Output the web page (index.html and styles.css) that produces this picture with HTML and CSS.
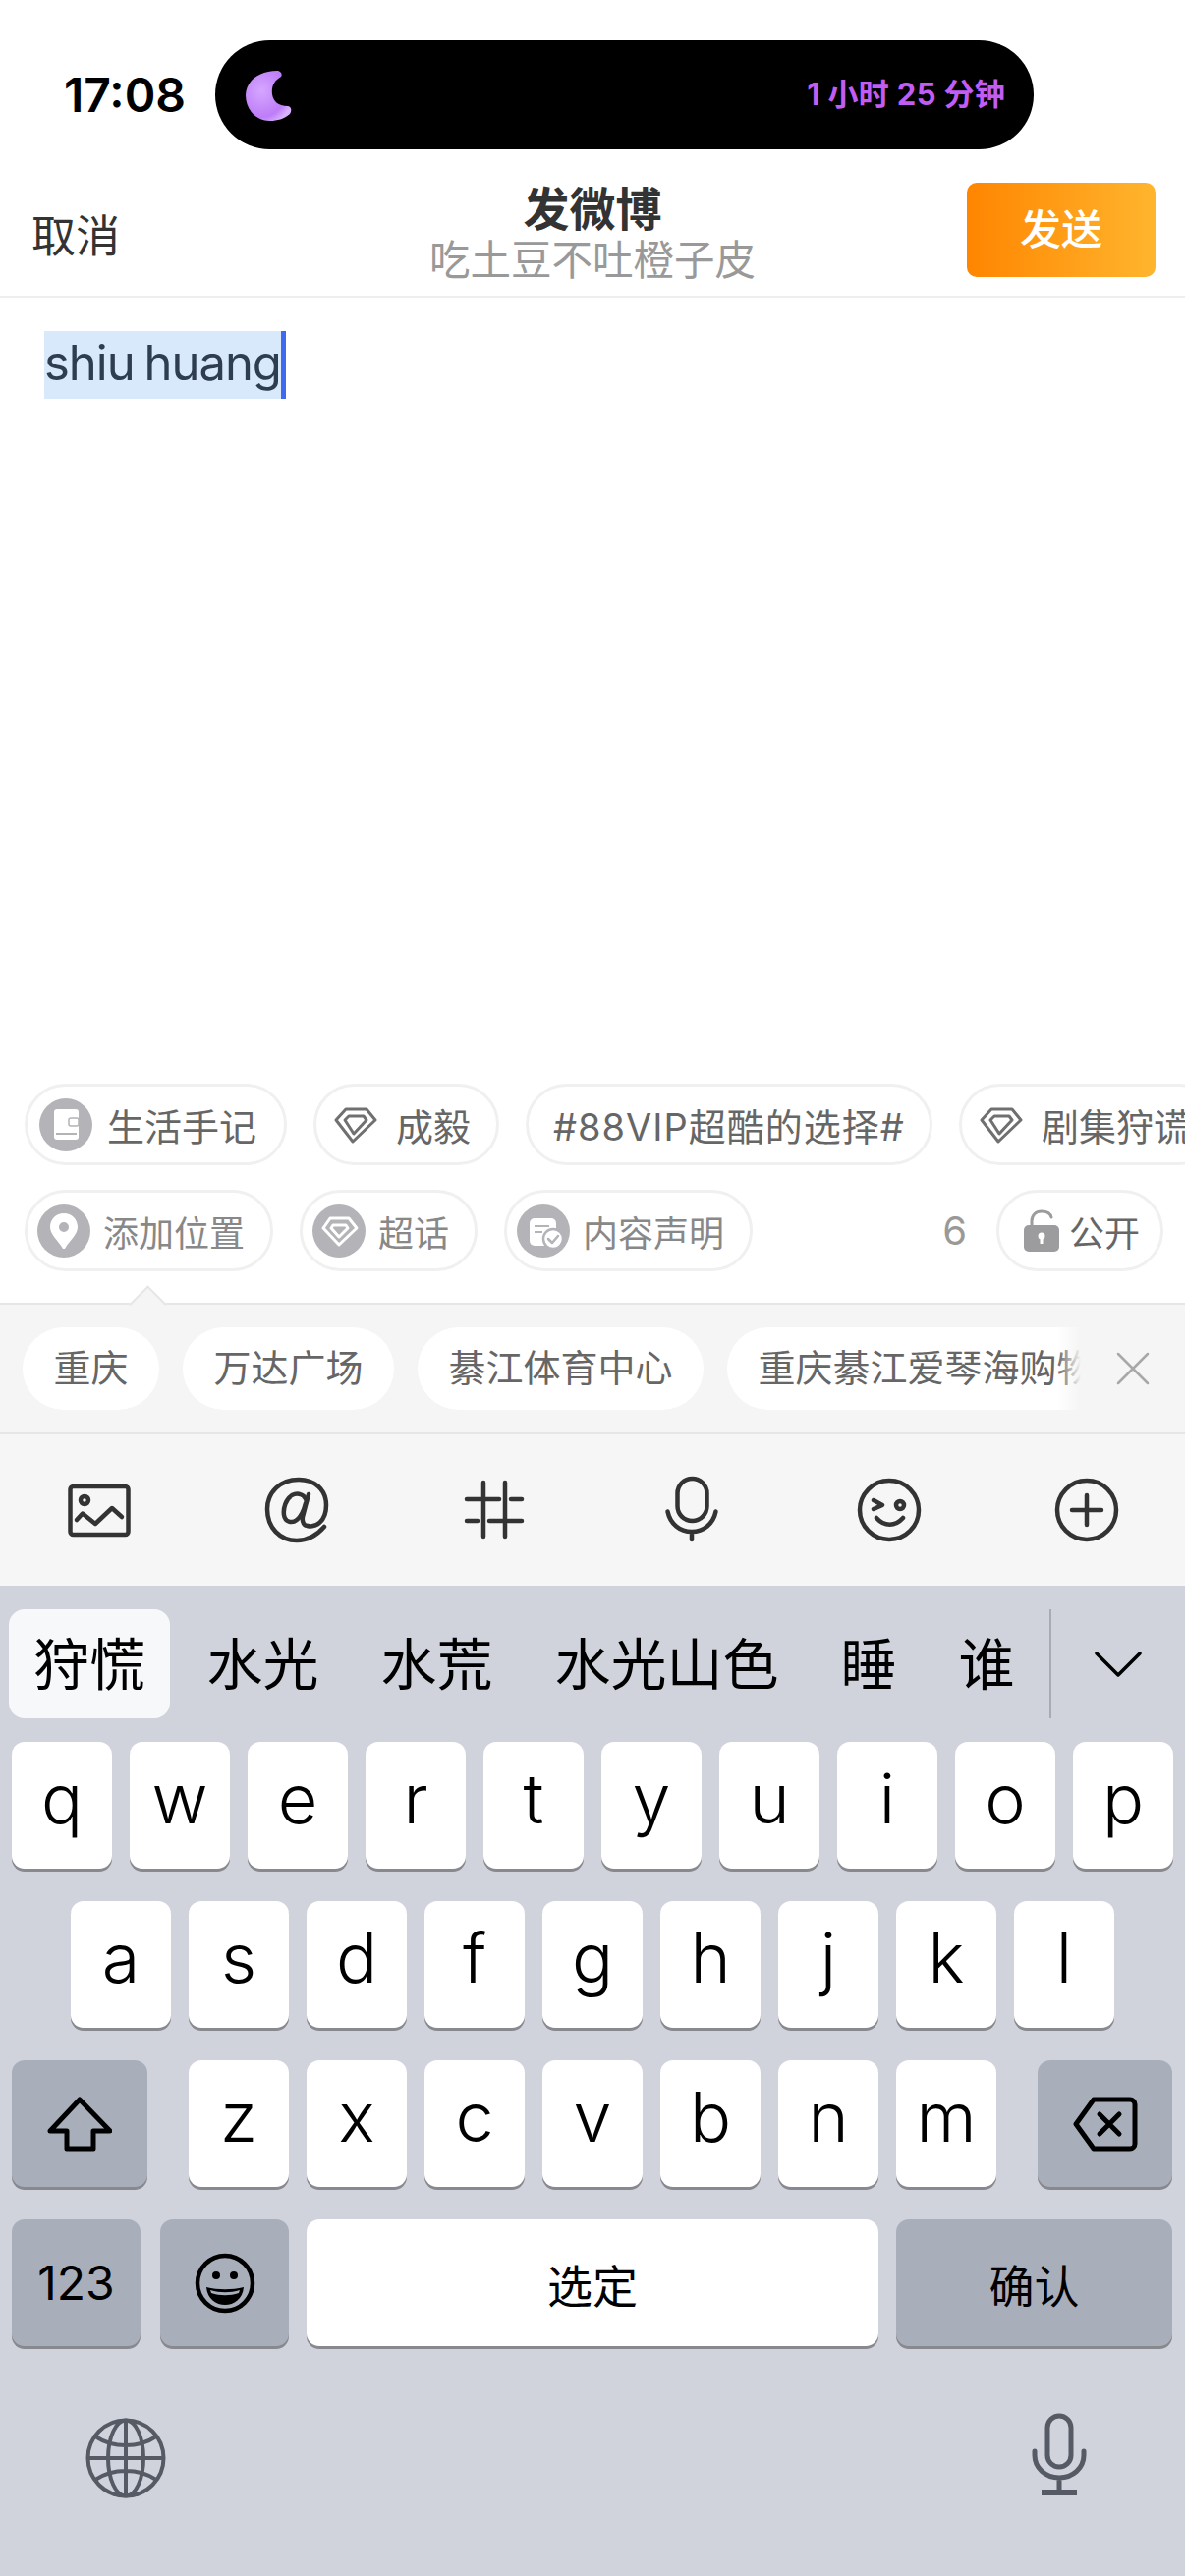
FILE: index.html
```html
<!DOCTYPE html>
<html lang="zh">

<head>
    <meta charset="UTF-8">
    <meta name="viewport" content="width=device-width, initial-scale=1.0">
    <title>发微博</title>
    <link rel="stylesheet" href="styles.css">
</head>

<body>
    <!-- Status bar -->
    <div class="status">
        <div class="time">17:08</div>
        <div class="island">
            <svg class="moon" width="48" height="54" viewBox="0 0 48 54">
                <defs>
                    <radialGradient id="moonFill" cx="0.35" cy="0.4" r="0.7">
                        <stop offset="0" stop-color="#d6a6ff" />
                        <stop offset="0.75" stop-color="#bd7df8" />
                        <stop offset="1" stop-color="#d9b0fd" />
                    </radialGradient>
                </defs>
                <path fill="url(#moonFill)" d="M33 2C36 2 39 5 37 8C30 12 27 18 28 26C29 33 34 38 44 38C48 39 48 43 46 46C40 51 33 53 26 53C11 53 1 41 1 27C1 13 14 2 33 2Z" />
            </svg>
            <div class="timer">1 小时 25 分钟</div>
        </div>
    </div>

    <!-- Nav -->
    <div class="nav">
        <div class="cancel">取消</div>
        <div class="title">
            <div class="title-main">发微博</div>
            <div class="title-sub">吃土豆不吐橙子皮</div>
        </div>
        <div class="send-wrap"><div class="send">发送</div></div>
    </div>

    <!-- Compose -->
    <div class="compose">
        <span class="selected">shiu huang</span>
    </div>

    <!-- Topic chips -->
    <div class="chips chips-top">
        <div class="chip chip-lead">
            <svg class="chip-icon" width="54" height="54" viewBox="0 0 54 54">
                <circle cx="27" cy="27" r="27" fill="#b3b3b8" />
                <rect x="15" y="11" width="25" height="31" rx="3" fill="#fff" />
                <rect x="17" y="35" width="21" height="2" fill="#b3b3b8" />
                <rect x="30" y="20" width="10" height="8" rx="2" fill="#fff" stroke="#b3b3b8" stroke-width="1.5" />
            </svg>
            <span>生活手记</span>
        </div>
        <div class="chip chip-gem">
            <svg width="44" height="38" viewBox="0 0 44 38" fill="none" stroke="#707070" stroke-width="3" stroke-linejoin="round" stroke-linecap="round">
                <path d="M12 3H33L42 14L19 36L2 14Z" />
                <path d="M15 10H30L33 14L20 28L11 14Z" />
            </svg>
            <span>成毅</span>
        </div>
        <div class="chip chip-plain"><span>#88VIP超酷的选择#</span></div>
        <div class="chip chip-gem">
            <svg width="44" height="38" viewBox="0 0 44 38" fill="none" stroke="#707070" stroke-width="3" stroke-linejoin="round" stroke-linecap="round">
                <path d="M12 3H33L42 14L19 36L2 14Z" />
                <path d="M15 10H30L33 14L20 28L11 14Z" />
            </svg>
            <span>剧集狩谎</span>
        </div>
    </div>

    <div class="chips chips-actions">
        <div class="chip chip-action">
            <svg class="chip-icon" width="54" height="54" viewBox="0 0 54 54">
                <circle cx="27" cy="27" r="27" fill="#b3b3b8" />
                <path fill="#fff" fill-rule="evenodd" d="M27 9C35 9 41 15 41 23C41 31 33 36 28 45H26C21 36 13 31 13 23C13 15 19 9 27 9ZM27 18A5 5 0 1 0 27 28A5 5 0 1 0 27 18Z" />
            </svg>
            <span>添加位置</span>
        </div>
        <div class="chip chip-action">
            <svg class="chip-icon" width="54" height="54" viewBox="0 0 54 54">
                <circle cx="27" cy="27" r="27" fill="#b3b3b8" />
                <path fill="none" stroke="#fff" stroke-width="3" stroke-linejoin="round" stroke-linecap="round" d="M18 14H37L45 24L27 41L11 24Z" />
                <path fill="none" stroke="#fff" stroke-width="3" stroke-linejoin="round" stroke-linecap="round" d="M21 21H34L36 24L27 33L19 24Z" />
            </svg>
            <span>超话</span>
        </div>
        <div class="chip chip-action">
            <svg class="chip-icon" width="54" height="54" viewBox="0 0 54 54">
                <circle cx="27" cy="27" r="27" fill="#b3b3b8" />
                <rect x="13" y="14" width="27" height="28" rx="5" fill="#fff" />
                <path stroke="#b3b3b8" stroke-width="2" d="M18 22H33M18 28H26" />
                <circle cx="37" cy="35" r="10" fill="#fff" stroke="#b3b3b8" stroke-width="2.5" />
                <path fill="none" stroke="#b3b3b8" stroke-width="2.5" stroke-linecap="round" stroke-linejoin="round" d="M32 35L36 39L42 32" />
            </svg>
            <span>内容声明</span>
        </div>
        <div class="count">6</div>
        <div class="chip chip-public">
            <svg width="38" height="44" viewBox="0 0 38 44">
                <path fill="none" stroke="#9c9c9e" stroke-width="3" stroke-linecap="round" d="M9 16V12C9 6 13 2 19 2C24 2 28 4 29 8" />
                <rect x="1" y="16" width="36" height="27" rx="5" fill="#9c9c9e" />
                <circle cx="19" cy="27" r="3.5" fill="#fff" />
                <rect x="17.5" y="27" width="3" height="8" fill="#fff" />
            </svg>
            <span>公开</span>
        </div>
    </div>

    <!-- Location suggestions -->
    <div class="places">
        <div class="place-list">
            <div class="place">重庆</div>
            <div class="place">万达广场</div>
            <div class="place">綦江体育中心</div>
            <div class="place">重庆綦江爱琴海购物</div>
        </div>
        <svg class="place-close" width="34" height="34" viewBox="0 0 34 34" fill="none" stroke="#a8a8a8" stroke-width="2.5" stroke-linecap="round">
            <path d="M2 2L32 32M32 2L2 32" />
        </svg>
    </div>

    <!-- Toolbar -->
    <div class="toolbar">
        <svg width="70" height="70" viewBox="0 0 70 70">
            <rect x="5.5" y="11" width="59" height="49" rx="3" />
            <circle cx="20" cy="25" r="4" />
            <path d="M12 45L18 38.5L31 49L48 33L58 42" />
        </svg>
        <svg width="70" height="70" viewBox="0 0 70 70">
            <path d="M46 51C54 53 65 47 65 30C65 14 53 4 37 4C18 4 5 17 5 34C5 53 18 66 35 66C46 66 56 60 63 52" />
            <path d="M47 19L41 42C40 48 43 51 46 51" />
            <path d="M45 26C43 19 36 17 30 20C24 24 21 33 22 40C23 47 30 49 35 45C39 42 42 36 44 28" />
        </svg>
        <svg width="70" height="70" viewBox="0 0 70 70">
            <path d="M24 7V62M46 7V62M7 24H40M52 24H63M7 46H18M30 46H63" />
        </svg>
        <svg width="70" height="70" viewBox="0 0 70 70">
            <rect x="20.5" y="3" width="30" height="43" rx="15" />
            <path d="M10.5 36.5C13 49 23 57 35 57C47 57 57 49 59.5 36.5M35 57V65" />
        </svg>
        <svg width="70" height="70" viewBox="0 0 70 70">
            <circle cx="35" cy="35" r="30" />
            <path d="M19 25L28 30L19 34M22 43C30 52 41 52 49 43" />
            <circle cx="46" cy="30" r="4" />
        </svg>
        <svg width="70" height="70" viewBox="0 0 70 70">
            <circle cx="35" cy="35" r="30" />
            <path d="M20 35H50M35 20V50" />
        </svg>
    </div>

    <!-- Keyboard -->
    <div class="keyboard">
        <div class="candidates">
            <div class="cand-list">
                <div class="cand cand-active">狩慌</div>
                <div class="cand">水光</div>
                <div class="cand">水荒</div>
                <div class="cand">水光山色</div>
                <div class="cand">睡</div>
                <div class="cand">谁</div>
            </div>
            <div class="cand-more">
                <svg width="48" height="26" viewBox="0 0 48 26" fill="none" stroke="#000" stroke-width="3.5" stroke-linecap="round" stroke-linejoin="round">
                    <path d="M2 2L24 24L46 2" />
                </svg>
            </div>
        </div>

        <div class="row">
            <div class="key">q</div><div class="key">w</div><div class="key">e</div><div class="key">r</div><div class="key">t</div>
            <div class="key">y</div><div class="key">u</div><div class="key">i</div><div class="key">o</div><div class="key">p</div>
        </div>
        <div class="row row-home">
            <div class="key">a</div><div class="key">s</div><div class="key">d</div><div class="key">f</div><div class="key">g</div>
            <div class="key">h</div><div class="key">j</div><div class="key">k</div><div class="key">l</div>
        </div>
        <div class="row">
            <div class="key key-fn key-shift">
                <svg width="66" height="56" viewBox="0 0 66 56" fill="none" stroke="#000" stroke-width="5" stroke-linejoin="round">
                    <path d="M33 3L64 35H47V53H20V35H3Z" />
                </svg>
            </div>
            <div class="key key-z">z</div><div class="key">x</div><div class="key">c</div><div class="key">v</div>
            <div class="key">b</div><div class="key">n</div><div class="key">m</div>
            <div class="key key-fn key-delete">
                <svg width="66" height="56" viewBox="0 0 66 56" fill="none" stroke="#000" stroke-width="5" stroke-linejoin="round" stroke-linecap="round">
                    <path d="M21 3H58A5 5 0 0 1 63 8V48A5 5 0 0 1 58 53H21L3 28Z" />
                    <path d="M27 18L47 38M47 18L27 38" />
                </svg>
            </div>
        </div>
        <div class="row">
            <div class="key key-fn key-num">123</div>
            <div class="key key-fn key-emoji">
                <svg width="62" height="62" viewBox="0 0 62 62">
                    <circle cx="31" cy="31" r="28" fill="none" stroke="#000" stroke-width="4.5" />
                    <circle cx="22" cy="23" r="4" />
                    <circle cx="40" cy="23" r="4" />
                    <path d="M12 35C24 38 38 38 50 35C49 47 40 53 31 53C22 53 13 47 12 35Z" />
                    <path fill="#a9afba" d="M16 38C26 41 36 41 46 38L45 41C36 44 26 44 17 41Z" />
                </svg>
            </div>
            <div class="key key-space">选定</div>
            <div class="key key-fn key-confirm">确认</div>
        </div>

        <div class="kb-bottom">
            <svg class="globe" width="82" height="82" viewBox="0 0 82 82" fill="none" stroke="#555a64" stroke-width="4">
                <circle cx="41" cy="41" r="38.5" />
                <ellipse cx="41" cy="41" rx="18" ry="38.5" />
                <path d="M41 3V79M3 41H79M10 19C28 31 54 31 72 19M10 63C28 51 54 51 72 63" />
            </svg>
            <svg width="56" height="84" viewBox="0 0 56 84" fill="none" stroke="#555a64" stroke-width="5" stroke-linecap="round">
                <rect x="16" y="3" width="24" height="52" rx="12" />
                <path d="M3 39V43C3 56 14 66 28 66C42 66 53 56 53 43V39M28 66V80" />
                <path stroke-width="6" stroke-linecap="butt" d="M10 81H46" />
            </svg>
        </div>
    </div>
</body>

</html>
```

FILE: styles.css
```css
body {
    font-family: Inter, "Noto Sans CJK SC", sans-serif;
    margin: 0;
    width: 1206px;
    height: 2622px;
    overflow: hidden;
    background: #fff;
    color: #333;
}

/* status bar */
.status {
    display: flex;
    height: 164px;
    box-sizing: border-box;
    padding: 41px 0 0 65px;
}

.time {
    width: 154px;
    height: 111px;
    line-height: 111px;
    font-size: 48px;
    font-weight: 600;
    color: #000;
}

.island {
    display: flex;
    align-items: center;
    justify-content: space-between;
    width: 833px;
    height: 111px;
    box-sizing: border-box;
    padding: 0 29px 0 30px;
    background: #000;
    border-radius: 56px;
}

.timer {
    font-size: 31px;
    font-weight: 700;
    letter-spacing: 0.3px;
    line-height: 36px;
    padding-bottom: 1px;
    color: #c15df2;
    white-space: nowrap;
}

/* nav */
.nav {
    display: grid;
    grid-template-columns: 1fr auto 1fr;
    align-items: center;
    height: 139px;
    box-sizing: border-box;
    padding: 0 30px 4px 30px;
    border-bottom: 2px solid #eee;
}

.cancel {
    font-size: 45px;
    padding: 13px 0 0 2px;
}

.title {
    text-align: center;
    padding-top: 16px;
}

.title-main {
    font-size: 47px;
    font-weight: 700;
    line-height: 50px;
}

.title-sub {
    font-size: 41.5px;
    line-height: 50px;
    margin-top: 2px;
    color: #999;
}

.send-wrap {
    display: flex;
    justify-content: flex-end;
    padding-top: 7px;
}

.send {
    width: 192px;
    height: 96px;
    line-height: 96px;
    text-align: center;
    font-size: 42px;
    font-weight: 500;
    color: #fff;
    border-radius: 10px;
    background: linear-gradient(90deg, #ff8500, #ffb52e);
}

/* compose */
.compose {
    height: 800px;
    box-sizing: border-box;
    padding: 34px 0 0 45px;
}

.selected {
    display: inline-block;
    height: 69px;
    line-height: 66px;
    font-size: 49px;
    letter-spacing: -1px;
    word-spacing: -3px;
    color: #2e3d4f;
    background: #d7e9fa;
    border-right: 5px solid #4169ef;
}

/* chips */
.chips {
    display: flex;
    align-items: center;
    height: 83px;
    padding-left: 25px;
    white-space: nowrap;
    overflow: hidden;
}

.chips-actions {
    margin-top: 25px;
    padding-right: 22px;
}

.chip {
    display: flex;
    flex-shrink: 0;
    align-items: center;
    box-sizing: border-box;
    height: 83px;
    border: 3px solid #f0f0f0;
    border-radius: 42px;
    color: #666;
    font-size: 38px;
}

.chips-top .chip {
    margin-right: 27px;
}

.chip-lead {
    padding: 0 28px 0 12px;
    gap: 15px;
}

.chip-gem {
    padding: 0 26px 0 18px;
    gap: 19px;
}

.chip-plain {
    padding: 0 25px;
    letter-spacing: 1px;
}

.chip-action {
    padding: 0 26px 0 10px;
    gap: 13px;
    font-size: 36px;
    color: #888;
    margin-right: 27px;
}

.count {
    margin-left: auto;
    margin-right: 30px;
    font-size: 40px;
    color: #999;
}

.chip-public {
    margin-right: 0;
    padding: 0 21px 0 24px;
    gap: 9px;
    font-size: 36px;
}

/* location suggestions */
.places {
    position: relative;
    display: flex;
    align-items: center;
    height: 132px;
    margin-top: 32px;
    box-sizing: border-box;
    padding-left: 23px;
    background: #f5f5f5;
    border-top: 2px solid #e6e6e6;
}

.places::before {
    content: "";
    position: absolute;
    left: 137px;
    top: -14px;
    width: 25px;
    height: 25px;
    background: #f5f5f5;
    border-top: 2px solid #e6e6e6;
    border-left: 2px solid #e6e6e6;
    transform: rotate(45deg);
}

.place-list {
    position: relative;
    display: flex;
    gap: 24px;
    width: 1077px;
    overflow: hidden;
}

.place-list::after {
    content: "";
    position: absolute;
    top: 0;
    right: 0;
    bottom: 0;
    width: 24px;
    background: linear-gradient(90deg, rgba(245, 245, 245, 0), #f5f5f5);
}

.place {
    flex-shrink: 0;
    height: 84px;
    line-height: 82px;
    padding: 0 31.5px;
    font-size: 38px;
    color: #666;
    background: #fff;
    border-radius: 42px;
    white-space: nowrap;
}

.place-close {
    margin-left: 36px;
}

/* toolbar */
.toolbar {
    display: grid;
    grid-template-columns: repeat(6, 1fr);
    justify-items: center;
    align-items: center;
    height: 156px;
    box-sizing: border-box;
    background: #f6f6f6;
    border-top: 2px solid #e6e6e6;
}

.toolbar svg {
    fill: none;
    stroke: #333;
    stroke-width: 4.5;
    stroke-linecap: round;
    stroke-linejoin: round;
}

/* keyboard */
.keyboard {
    height: 1008px;
    background: #d0d3dc;
}

.candidates {
    display: flex;
    height: 159px;
    box-sizing: border-box;
    padding-top: 24px;
}

.cand-list {
    display: flex;
    width: 1070px;
    height: 111px;
    box-sizing: border-box;
    padding-left: 9px;
    overflow: hidden;
    border-right: 2px solid #a9abb2;
    white-space: nowrap;
}

.cand {
    flex-shrink: 0;
    height: 111px;
    line-height: 114px;
    padding: 0 31.5px;
    font-size: 57px;
    color: #000;
}

.cand-active {
    padding: 0 25px;
    margin-right: 6px;
    background: #f7f8fa;
    border-radius: 16px;
}

.cand-more {
    display: flex;
    flex: 1;
    align-items: center;
    justify-content: center;
    height: 111px;
}

.row {
    display: flex;
    gap: 18px;
    padding: 0 12px;
    margin-bottom: 33px;
}

.row-home {
    padding-left: 72px;
}

.key {
    display: flex;
    align-items: center;
    justify-content: center;
    flex-shrink: 0;
    width: 102px;
    height: 129px;
    box-sizing: border-box;
    padding-bottom: 14px;
    font-size: 70px;
    font-weight: 300;
    color: #000;
    background: #fff;
    border-radius: 13px;
    box-shadow: 0 3px 0 #88898e;
}

.key-fn {
    background: #a9afba;
    padding-bottom: 0;
}

.key-shift {
    width: 138px;
    margin-right: 24px;
}

.key-delete {
    width: 137px;
    margin-left: 24px;
}

.key-num {
    width: 131px;
    margin-right: 2px;
    font-size: 48px;
    font-weight: 400;
}

.key-emoji {
    width: 131px;
}

.key-space {
    width: 582px;
    font-size: 46px;
    font-weight: 400;
    padding-bottom: 0;
}

.key-confirm {
    width: 281px;
    font-size: 46px;
    font-weight: 400;
}

.kb-bottom {
    display: flex;
    justify-content: space-between;
    padding: 35px 100px 0 87px;
}

.globe {
    margin-top: 5px;
}
```
